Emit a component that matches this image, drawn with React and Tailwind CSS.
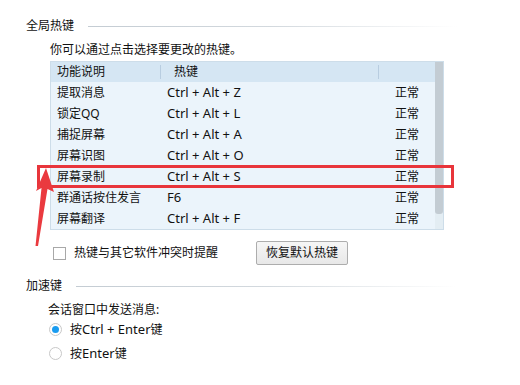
import React from "react";

const rows = [
  ["提取消息", "Ctrl + Alt + Z"],
  ["锁定QQ", "Ctrl + Alt + L"],
  ["捕捉屏幕", "Ctrl + Alt + A"],
  ["屏幕识图", "Ctrl + Alt + O"],
  ["屏幕录制", "Ctrl + Alt + S"],
  ["群通话按住发言", "F6"],
  ["屏幕翻译", "Ctrl + Alt + F"],
];

function SectionTitle({ label }) {
  return (
    <div className="flex items-center h-[20px] pl-[26px] pr-[63px]">
      <span className="text-[12px] text-[#111]">{label}</span>
      <div className="flex-1 h-px ml-[14px] bg-gradient-to-r from-[#c4ccd3] via-[#d3d9de] to-white" />
    </div>
  );
}

function Radio({ checked, children }) {
  return (
    <div className="flex items-center h-[20px] pl-[49px]">
      <span className="w-[13px] h-[13px] rounded-full border border-[#c8c8c8] bg-white flex items-center justify-center">
        {checked && <span className="w-[7px] h-[7px] rounded-full bg-[#1a9cf0]" />}
      </span>
      <span className="ml-[8px] text-[12px] text-[#111]">{children}</span>
    </div>
  );
}

export default function App() {
  return (
    <div
      className="relative w-[520px] h-[385px] bg-white overflow-hidden flex flex-col leading-none"
      style={{ fontFamily: '"Noto Sans", "Noto Sans CJK SC", sans-serif' }}
    >
      <div className="mt-[16px]">
        <SectionTitle label="全局热键" />
      </div>

      <div className="mt-[4px] h-[20px] pl-[50px] flex items-center text-[12px] text-[#111]">
        你可以通过点击选择要更改的热键。
      </div>

      {/* hotkey table */}
      <div className="mt-px ml-[50px] w-[394px] border border-[#cddde9] bg-[#ebf4fb] flex">
        <div className="flex-1 flex flex-col">
          <div className="h-[20px] bg-[#d5e6f3] flex items-center text-[12px] text-[#111]">
            <div className="w-[109px] pl-[6px]">功能说明</div>
            <div className="w-px h-[14px] bg-[#b8cde0]" />
            <div className="w-[217px] pl-[13px]">热键</div>
            <div className="w-px h-[14px] bg-[#b8cde0]" />
            <div className="flex-1" />
          </div>
          {rows.map(([name, key]) => (
            <div key={name} className="h-[21px] flex items-center text-[12px] text-[#111]">
              <div className="w-[110px] pl-[6px]">{name}</div>
              <div className="w-[218px] pl-[6px] text-[13px]">{key}</div>
              <div className="flex-1 pl-[16px]">正常</div>
            </div>
          ))}
        </div>
        <div className="w-[8px] flex flex-col bg-[#e3edf3]">
          <div className="h-[152px] bg-[#c3ccd3] rounded-b-[3px]" />
        </div>
      </div>

      <div className="mt-[11px] h-[24px] flex items-center pl-[53px]">
        <span className="w-[13px] h-[13px] border border-[#a8a8a8] bg-white" />
        <span className="ml-[8px] text-[12px] text-[#111]">热键与其它软件冲突时提醒</span>
        <button className="ml-[38px] w-[92px] h-[24px] border border-[#adadad] rounded-[2px] bg-gradient-to-b from-[#f6f6f6] to-[#e8e8e8] text-[12px] text-[#111]">
          恢复默认热键
        </button>
      </div>

      <div className="mt-[11px]">
        <SectionTitle label="加速键" />
      </div>

      <div className="mt-[4px] h-[20px] pl-[48px] flex items-center text-[12px] text-[#111]">
        会话窗口中发送消息:
      </div>
      <div className="flex flex-col gap-[4px] mt-[-1px]">
        <Radio checked>
          按<span className="text-[13px]">Ctrl + Enter</span>键
        </Radio>
        <Radio>
          按<span className="text-[13px]">Enter</span>键
        </Radio>
      </div>

      {/* annotation overlay */}
      <div className="absolute left-[37px] top-[165px] w-[417px] h-[23px] border-[3px] border-[#e8353b]" />
      <svg className="absolute left-0 top-0" width="520" height="385" viewBox="0 0 520 385">
        <polygon
          points="46,168 54,192 47.5,189 38,246 35.5,246 41.5,188 36,191"
          fill="#ea3a3f"
        />
      </svg>
    </div>
  );
}
